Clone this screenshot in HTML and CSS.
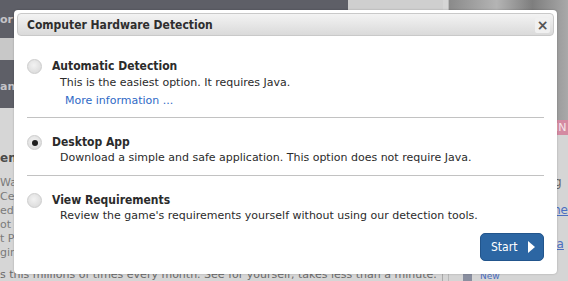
FILE: index.html
```html
<!DOCTYPE html>
<html lang="en">
<head>
    <meta charset="UTF-8">
    <title>Computer Hardware Detection</title>
    <link rel="stylesheet" href="styles.css">
</head>
<body>

    <!-- page behind the dialog -->
    <div class="site">
        <div class="main-col">
            <div class="head-row">
                <div class="brand"><span class="cut-label">or</span></div>
                <div class="search-area"></div>
            </div>
            <div class="sub-nav"></div>
            <div class="plan-bar"><span class="cut-label">an</span></div>
            <div class="content">
                <h4 class="content-head">en</h4>
                <p class="content-line">Wa</p>
                <p class="content-line">Ce</p>
                <p class="content-line">ed</p>
                <p class="content-line">ot</p>
                <p class="content-line">t P</p>
                <p class="content-line">gin</p>
                <p class="content-foot">s this millions of times every month. See for yourself, takes less than a minute.</p>
            </div>
        </div>
        <div class="side-col">
            <div class="promo"></div>
            <div class="promo-bar">IN</div>
            <div class="side-box">
                <div class="side-input">g</div>
                <a class="side-link">me</a>
                <a class="side-link side-link-low">Sa</a>
            </div>
            <div class="side-foot"><span class="side-icon"></span><a>New</a></div>
        </div>
    </div>

    <!-- dialog -->
    <div class="dialog">
        <div class="dialog-title">
            <span>Computer Hardware Detection</span>
            <span class="close">&#215;</span>
        </div>
        <div class="dialog-body">
            <div class="option">
                <span class="radio"></span>
                <div class="option-text">
                    <div class="option-name">Automatic Detection</div>
                    <div class="option-desc">This is the easiest option. It requires Java.</div>
                    <a class="more-link">More information ...</a>
                </div>
            </div>
            <div class="option">
                <span class="radio checked"></span>
                <div class="option-text">
                    <div class="option-name">Desktop App</div>
                    <div class="option-desc">Download a simple and safe application. This option does not require Java.</div>
                </div>
            </div>
            <div class="option">
                <span class="radio"></span>
                <div class="option-text">
                    <div class="option-name">View Requirements</div>
                    <div class="option-desc">Review the game's requirements yourself without using our detection tools.</div>
                </div>
            </div>
            <div class="dialog-actions">
                <button class="start">Start <span class="arrow"></span></button>
            </div>
        </div>
    </div>

</body>
</html>
```

FILE: styles.css
```css
body {
    margin: 0;
    width: 568px;
    height: 281px;
    overflow: hidden;
    font-family: "DejaVu Sans", Verdana, sans-serif;
    background-color: #d5d5d5;
    position: relative;
}

/* page behind the dialog (already dimmed) */
.site {
    display: flex;
    height: 281px;
}
.main-col {
    width: 447px;
    display: flex;
    flex-direction: column;
}
.head-row {
    display: flex;
    height: 38px;
}
.brand {
    width: 348px;
    background-color: #5e5f67;
}
.cut-label {
    display: block;
    color: #c4c4c8;
    font-weight: bold;
    font-size: 11px;
    line-height: 40px;
}
.search-area {
    flex: 1;
    background-color: #cfcfcf;
}
.sub-nav {
    height: 24px;
    background-color: #c8c8c8;
}
.plan-bar {
    height: 48px;
    background-color: #5e5f67;
}
.plan-bar .cut-label {
    line-height: 54px;
}
.content {
    flex: 1;
    background-color: #d6d6d6;
    padding-top: 42px;
    color: #7a7a7a;
    font-size: 11px;
}
.content-head {
    margin: 0 0 10px 0;
    font-size: 12px;
    line-height: 16px;
    color: #4a4a4a;
}
.content-line {
    margin: 0;
    line-height: 14px;
}
.content-foot {
    margin: 9px 0 0 0;
    line-height: 12px;
    color: #6a6a6a;
    white-space: nowrap;
    border-right: 1px solid #aaa;
}
.side-col {
    flex: 1;
    display: flex;
    flex-direction: column;
    border-left: 1px solid #b9b9b9;
    margin-left: 5px;
}
.promo {
    height: 120px;
    background: linear-gradient(90deg, #8a8a8a, #b4b4b4 40%, #7e7e7e 70%, #a9a9a9);
}
.promo-bar {
    height: 15px;
    background-color: #d48aa2;
    color: #f4e6ea;
    font-size: 11px;
    line-height: 15px;
    padding-left: 106px;
}
.side-box {
    flex: 1;
    padding: 40px 0 0 100px;
    font-size: 12px;
}
.side-input {
    color: #666;
    border-left: 1px solid #aaa;
    padding-left: 4px;
    height: 18px;
}
.side-link {
    display: block;
    margin-top: 10px;
    color: #4b6ec2;
    text-decoration: underline;
}
.side-link-low {
    margin-top: 20px;
}
.side-foot {
    height: 10px;
    display: flex;
    gap: 8px;
    padding-left: 14px;
    font-size: 9px;
    line-height: 10px;
    color: #4b6ec2;
}
.side-icon {
    width: 9px;
    height: 7px;
    margin-top: 3px;
    background-color: #8a8fa0;
}

/* dialog */
.dialog {
    position: absolute;
    left: 14px;
    top: 10px;
    width: 537px;
    height: 258px;
    padding: 3px;
    background-color: #fff;
    border-radius: 4px;
    box-shadow: 0 0 2px rgba(0, 0, 0, 0.25);
}
.dialog-title {
    display: flex;
    justify-content: space-between;
    align-items: center;
    height: 21px;
    padding: 0 3px 0 9px;
    background: linear-gradient(#f3f3f3, #dadada);
    border: 1px solid #c9c9c9;
    border-radius: 4px;
    color: #2e2e2e;
    font-family: "DejaVu Sans Condensed", "DejaVu Sans", sans-serif;
    font-weight: bold;
    font-size: 12px;
}
.close {
    width: 15px;
    height: 15px;
    margin-top: 1px;
    background-color: #f0f0f0;
    border-radius: 2px;
    color: #555;
    font-family: "DejaVu Sans", sans-serif;
    font-weight: bold;
    font-size: 14px;
    line-height: 15px;
    text-align: center;
}
.dialog-body {
    padding: 6px 10px 0 10px;
}
.option {
    display: flex;
    padding: 16px 0 9px 0;
    border-top: 1px solid #c2c2c2;
}
.option:first-child {
    border-top: none;
    padding-bottom: 8px;
}
.option:last-child {
    padding-top: 17px;
}
.radio {
    width: 13px;
    height: 13px;
    margin: 1px 10px 0 0;
    border: 1px solid #cdcdcd;
    border-radius: 50%;
    background: radial-gradient(circle at 45% 40%, #f2f2f2, #d6d6d6);
    display: flex;
    align-items: center;
    justify-content: center;
}
.radio.checked::after {
    content: "";
    width: 6px;
    height: 6px;
    border-radius: 50%;
    background-color: #1e1e1e;
}
.option-name {
    font-family: "DejaVu Sans Condensed", "DejaVu Sans", sans-serif;
    font-weight: bold;
    font-size: 12px;
    line-height: 16px;
    color: #2b2b2b;
}
.option-desc {
    margin-left: 8px;
    font-size: 11px;
    line-height: 16px;
    color: #2b2b2b;
}
.option:first-child .option-desc {
    margin-top: 1px;
}
.more-link {
    display: block;
    margin: 2px 0 0 13px;
    font-size: 11px;
    line-height: 16px;
    color: #2f6ac6;
}
.dialog-actions {
    display: flex;
    justify-content: flex-end;
}
.start {
    width: 64px;
    height: 28px;
    padding: 0 0 0 10px;
    display: flex;
    align-items: center;
    gap: 11px;
    background-color: #2c66a3;
    border: 1px solid #22558c;
    border-radius: 5px;
    color: #fff;
    font-family: "DejaVu Sans Condensed", "DejaVu Sans", sans-serif;
    font-size: 12px;
}
.arrow {
    width: 0;
    height: 0;
    border-left: 7px solid #fff;
    border-top: 6px solid transparent;
    border-bottom: 6px solid transparent;
}
```
